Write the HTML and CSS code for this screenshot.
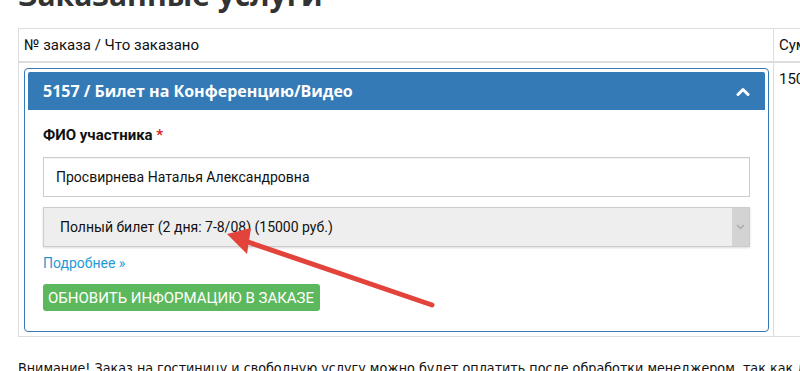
FILE: index.html
```html
<!DOCTYPE html>
<html lang="ru">
<head>
  <meta charset="UTF-8" />
  <title>Заказанные услуги</title>
  <link rel="stylesheet" href="styles.css">
</head>
<body>

  <div class="page">
    <h2 class="title">Заказанные услуги</h2>

    <table class="orders">
      <thead>
        <tr>
          <th class="col-what">№ заказа / Что заказано</th>
          <th class="col-sum">Сумма</th>
        </tr>
      </thead>
      <tbody>
        <tr>
          <td class="col-what">
            <div class="panel">
              <div class="panel-heading">
                <span>5157 / Билет на Конференцию/Видео</span>
                <svg class="chevron" width="14" height="9" viewBox="0 0 14 9">
                  <polyline points="2,7.5 7,2.5 12,7.5" fill="none" stroke="#fff" stroke-width="3" stroke-linecap="round" stroke-linejoin="round" />
                </svg>
              </div>
              <div class="panel-body">
                <label class="field-label">ФИО участника <span class="req">*</span></label>
                <div class="input">Просвирнева Наталья Александровна</div>
                <div class="select">
                  <span class="select-text">Полный билет (2 дня: 7-8/08) (15000 руб.)</span>
                  <span class="select-arrow">
                    <svg width="9" height="6" viewBox="0 0 9 6">
                      <polyline points="1,1 4.5,4.5 8,1" fill="none" stroke="#aaa" stroke-width="1.3" />
                    </svg>
                  </span>
                </div>
                <a class="more" href="#">Подробнее »</a>
                <button class="btn-update">Обновить информацию в заказе</button>
              </div>
            </div>
          </td>
          <td class="col-sum">15000</td>
        </tr>
      </tbody>
    </table>

    <p class="notice">Внимание! Заказ на гостиницу и свободную услугу можно будет оплатить после обработки менеджером, так как данные о стоимости будут уточнены</p>
  </div>

  <!-- стрелка-пометка поверх скриншота -->
  <svg class="annotation" width="800" height="371" viewBox="0 0 800 371">
    <line x1="432" y1="305" x2="245" y2="241" stroke="#e2433a" stroke-width="5" stroke-linecap="round" />
    <polygon points="227,234 251,228 247,254" fill="#e2433a" />
  </svg>

</body>
</html>
```

FILE: styles.css
```css
body {
  margin: 0;
  font-family: Roboto, "Liberation Sans", Arial, sans-serif;
  font-size: 14px;
  line-height: 20px;
  color: #111;
  background: #fff;
  position: relative;
  overflow: hidden;
  height: 371px;
}

.page {
  padding-left: 18px;
}

.title {
  font-family: "Open Sans", "Liberation Sans", sans-serif;
  font-weight: 700;
  font-size: 30px;
  line-height: 36px;
  color: #333;
  margin: -23px 0 15px;
  white-space: nowrap;
}

.orders {
  border-collapse: collapse;
  width: 900px;
  table-layout: fixed;
}

.orders th,
.orders td {
  border: 1px solid #ddd;
  text-align: left;
  vertical-align: top;
  font-size: 15px;
}

.orders th {
  font-weight: 400;
  padding: 6px 5px;
  border-bottom: 2px solid #ddd;
}

.orders .col-what {
  width: 744px;
}

.orders td.col-what {
  padding: 5px 4px 4px 5px;
  font-size: 14px;
}

.orders td.col-sum {
  padding: 6px 5px;
}

.panel {
  border: 1px solid #337ab7;
  border-radius: 4px;
  padding: 3px;
}

.panel-heading {
  background: #337ab7;
  color: #fff;
  font-family: "Open Sans", "Liberation Sans", sans-serif;
  font-weight: 700;
  font-size: 16px;
  height: 38px;
  padding: 0 15px;
  display: flex;
  align-items: center;
  justify-content: space-between;
  border-radius: 2px 2px 0 0;
}

.panel-body {
  padding: 15px 15px 17px;
}

.field-label {
  display: block;
  font-size: 15px;
  font-weight: 700;
  margin-bottom: 12px;
}

.req {
  color: #e02020;
}

.input {
  height: 38px;
  line-height: 38px;
  border: 1px solid #ccc;
  padding: 0 12px;
  box-shadow: inset 0 1px 1px rgba(0, 0, 0, 0.06);
}

.select {
  margin-top: 10px;
  height: 38px;
  border: 1px solid #ccc;
  background: #eee;
  display: flex;
  justify-content: space-between;
  box-shadow: 0 1px 2px rgba(0, 0, 0, 0.15);
}

.select-text {
  line-height: 38px;
  padding-left: 16px;
}

.select-arrow {
  width: 17px;
  background: #d3d3d3;
  display: flex;
  align-items: center;
  justify-content: center;
}

.more {
  display: block;
  margin-top: 6px;
  color: #1f9ad6;
  text-decoration: none;
}

.btn-update {
  margin-top: 11px;
  height: 27px;
  width: 277px;
  padding: 0 5px;
  border: none;
  border-radius: 3px;
  background: #5cb85c;
  color: #fff;
  font-family: Roboto, "Liberation Sans", Arial, sans-serif;
  font-size: 15px;
  text-transform: uppercase;
  text-align: left;
  cursor: pointer;
}

.notice {
  margin: 21px 0 0;
  white-space: nowrap;
  font-family: "Liberation Sans Narrow", "DejaVu Sans Condensed", Roboto, sans-serif;
  font-size: 14.2px;
}

.annotation {
  position: absolute;
  top: 0;
  left: 0;
  pointer-events: none;
}
```
